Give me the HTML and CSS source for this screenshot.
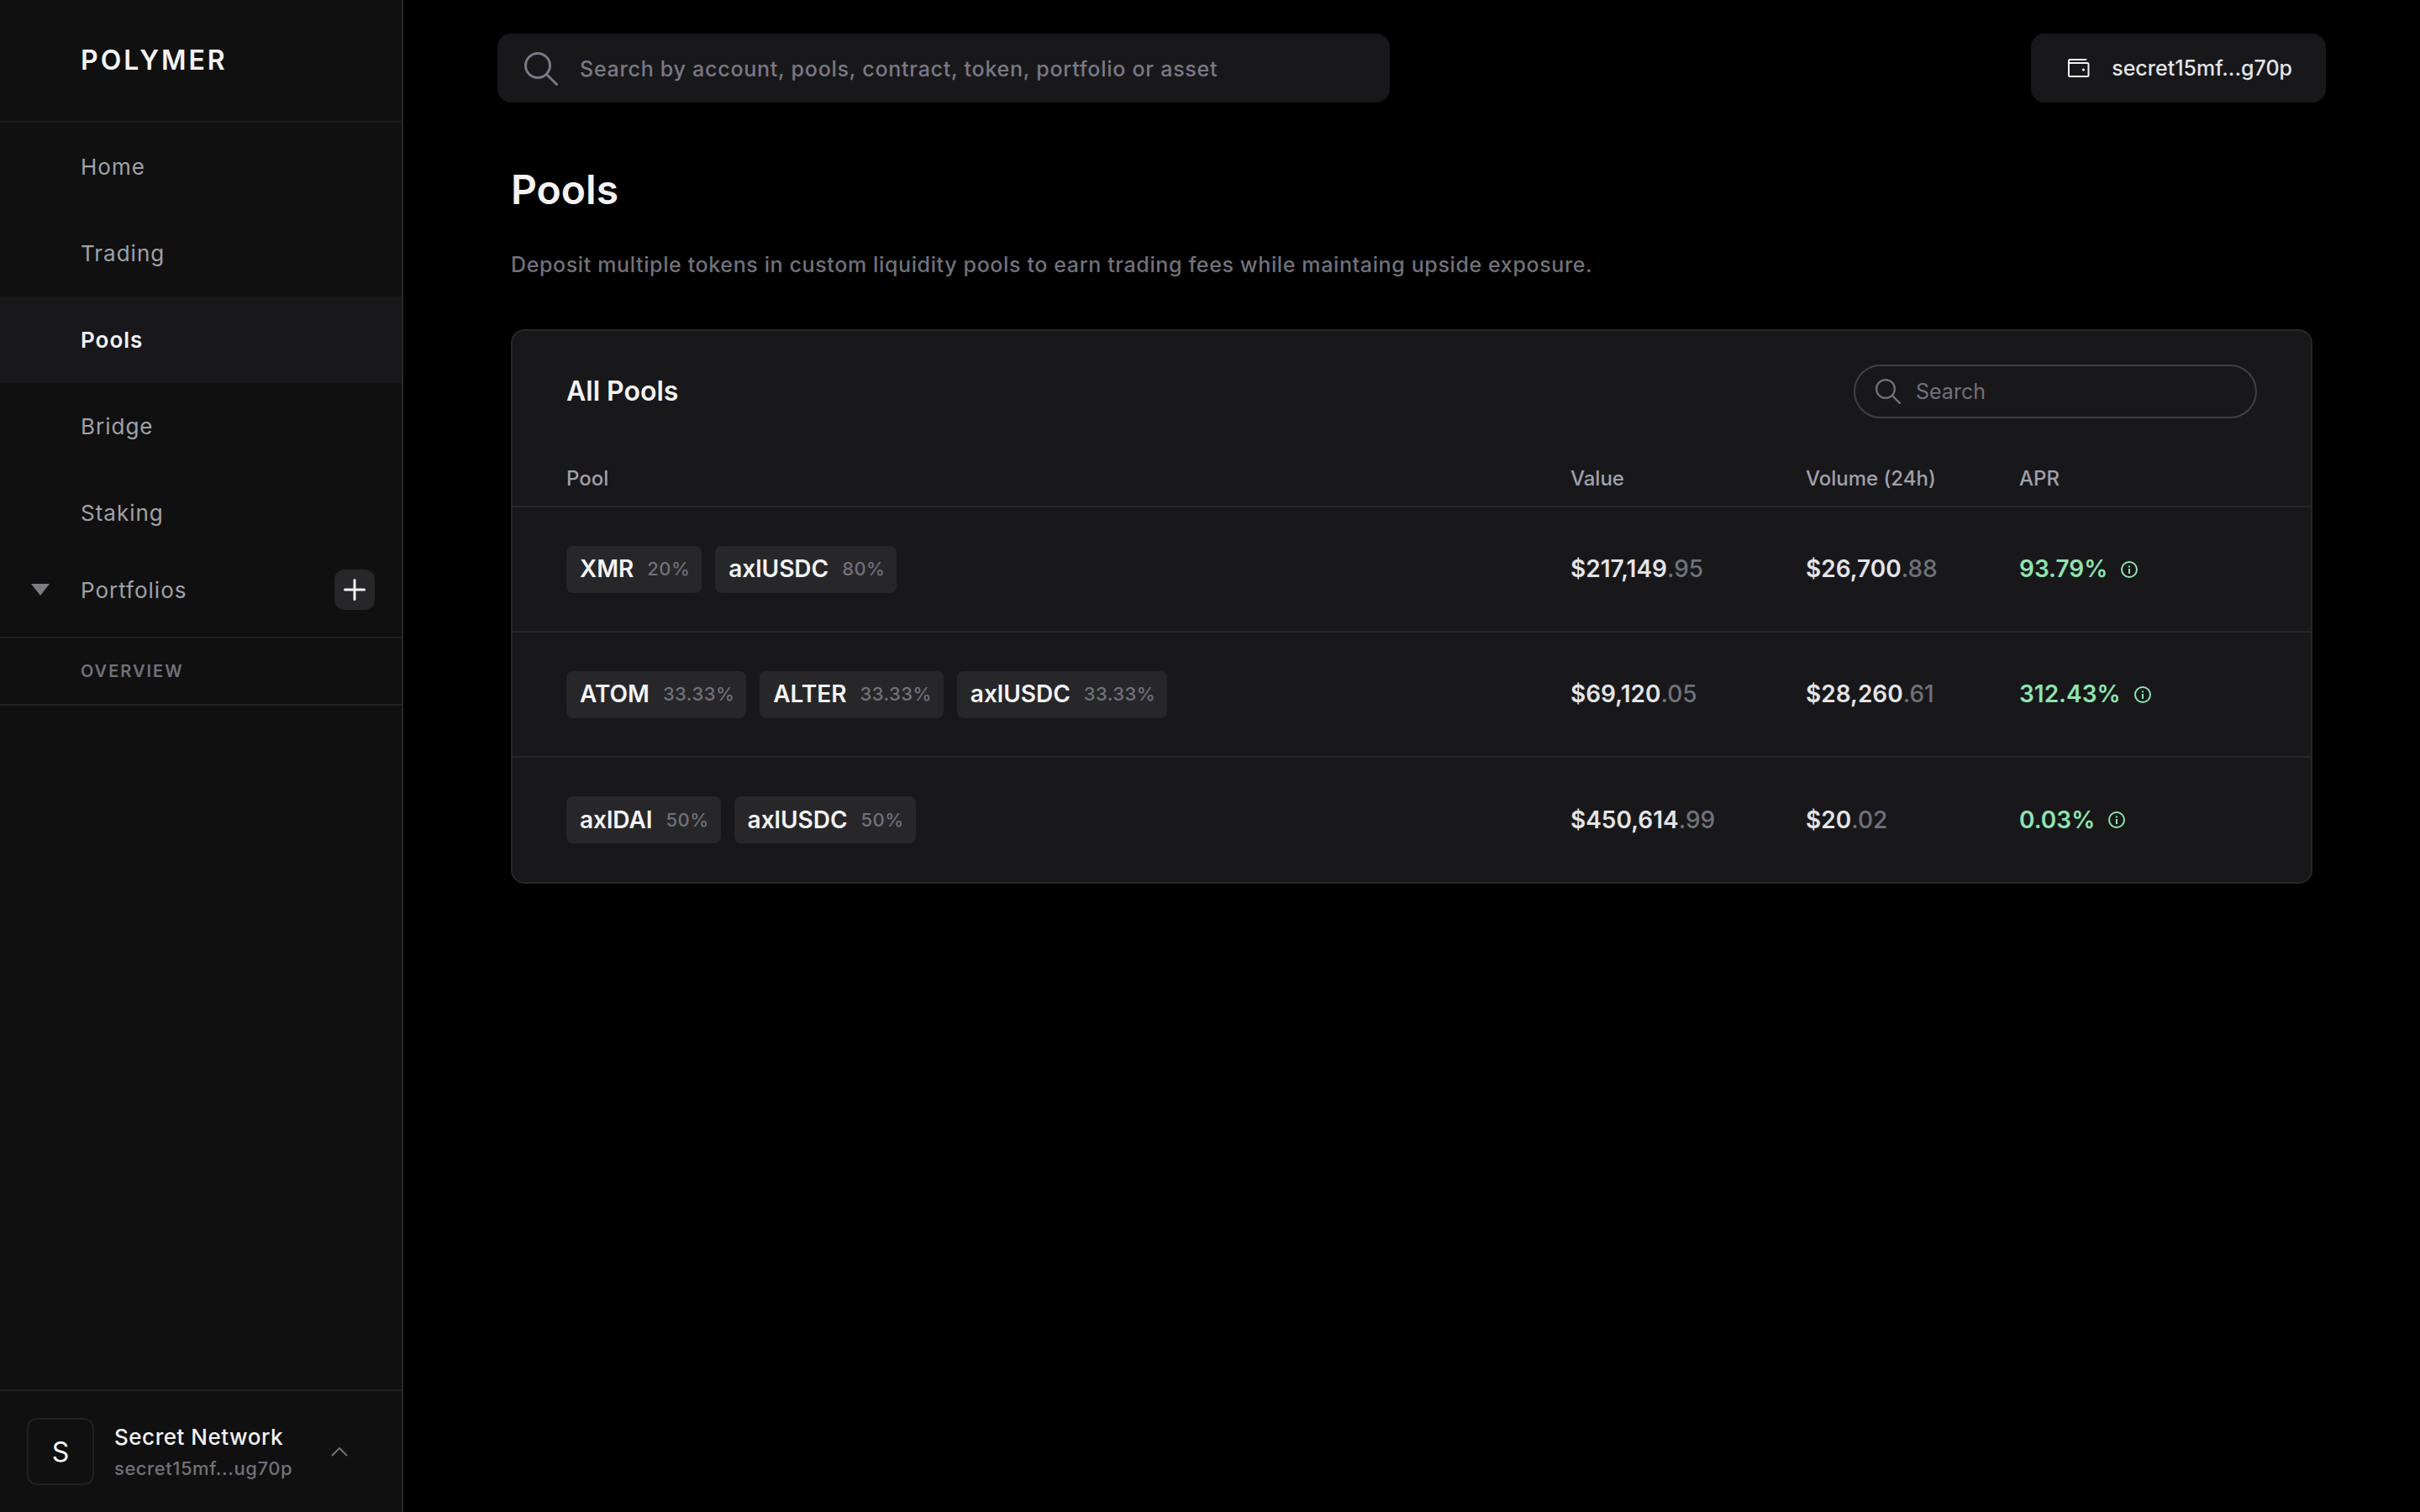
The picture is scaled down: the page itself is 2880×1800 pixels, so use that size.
FILE: index.html
```html
<!DOCTYPE html>
<html lang="en">
<head>
<meta charset="utf-8">
<meta name="viewport" content="width=device-width, initial-scale=1">
<title>Pools – Polymer</title>
<link rel="stylesheet" href="styles.css">
</head>
<body>
<div class="app">
  <aside class="sidebar">
    <a class="brand" href="#">POLYMER</a>
    <nav class="nav" aria-label="Main">
      <a class="nav-link" href="#">Home</a>
      <a class="nav-link" href="#">Trading</a>
      <a class="nav-link is-active" href="#" aria-current="page">Pools</a>
      <a class="nav-link" href="#">Bridge</a>
      <a class="nav-link" href="#">Staking</a>
    </nav>
    <div class="portfolios">
      <button class="portfolios-toggle" type="button" aria-expanded="true">
        <svg class="caret" viewBox="0 0 22 14" aria-hidden="true"><path d="M0 0h22L11 14z"/></svg>
        <span>Portfolios</span>
      </button>
      <button class="add-button" type="button" aria-label="Add portfolio">
        <svg class="plus" viewBox="0 0 26 26" aria-hidden="true"><path d="M13 1.500v23M1.500 13h23"/></svg>
      </button>
    </div>
    <a class="overview" href="#">OVERVIEW</a>
    <button class="account" type="button">
      <span class="avatar">S</span>
      <span class="account-text">
        <span class="account-name">Secret Network</span>
        <span class="account-address">secret15mf...ug70p</span>
      </span>
      <svg class="chevron" viewBox="0 0 20 12" aria-hidden="true"><path d="M1.500 10.500 10 2l8.500 8.500"/></svg>
    </button>
  </aside>

  <main class="main">
    <header class="topbar">
      <label class="global-search">
        <svg class="search-icon" viewBox="0 0 40 40" aria-hidden="true"><circle cx="16" cy="16" r="14.500"/><path d="M26.500 26.500 38.500 38.500"/></svg>
        <input class="global-input" type="text" aria-label="Search everything" placeholder="Search by account, pools, contract, token, portfolio or asset">
      </label>
      <button class="wallet" type="button">
        <svg class="wallet-icon" viewBox="0 0 32 24" aria-hidden="true"><path d="M25.500 2H6.500Q5 2 5 3.500V20.500Q5 22 6.500 22H27Q28.500 22 28.500 20.500V7.500Q28.500 6 27 6H5"/><circle cx="22.500" cy="14" r="1.600"/></svg>
        <span>secret15mf...g70p</span>
      </button>
    </header>

    <section class="content">
      <h1 class="title">Pools</h1>
      <p class="lead">Deposit multiple tokens in custom liquidity pools to earn trading fees while maintaing upside exposure.</p>

      <div class="card">
        <div class="card-head">
          <h2 class="card-title">All Pools</h2>
          <label class="pool-search">
            <svg class="search-icon search-icon-small" viewBox="0 0 40 40" aria-hidden="true"><circle cx="16" cy="16" r="14.500"/><path d="M26.500 26.500 38.500 38.500"/></svg>
            <input class="pool-input" type="text" aria-label="Search pools" placeholder="Search">
          </label>
        </div>
        <table class="pools">
          <colgroup><col><col class="col-value"><col class="col-volume"><col class="col-apr"></colgroup>
          <thead>
            <tr><th scope="col">Pool</th><th scope="col">Value</th><th scope="col">Volume (24h)</th><th scope="col">APR</th></tr>
          </thead>
          <tbody>
            <tr>
              <td><div class="chips"><span class="chip">XMR <small>20%</small></span><span class="chip">axlUSDC <small>80%</small></span></div></td>
              <td>$217,149<span class="cents">.95</span></td>
              <td>$26,700<span class="cents">.88</span></td>
              <td><div class="apr">93.79% <svg class="info" viewBox="0 0 20 20" aria-hidden="true"><circle cx="10" cy="10" r="9"/><path d="M10 9v6M10 5.500v2"/></svg></div></td>
            </tr>
            <tr>
              <td><div class="chips"><span class="chip">ATOM <small>33.33%</small></span><span class="chip">ALTER <small>33.33%</small></span><span class="chip">axlUSDC <small>33.33%</small></span></div></td>
              <td>$69,120<span class="cents">.05</span></td>
              <td>$28,260<span class="cents">.61</span></td>
              <td><div class="apr">312.43% <svg class="info" viewBox="0 0 20 20" aria-hidden="true"><circle cx="10" cy="10" r="9"/><path d="M10 9v6M10 5.500v2"/></svg></div></td>
            </tr>
            <tr>
              <td><div class="chips"><span class="chip">axlDAI <small>50%</small></span><span class="chip">axlUSDC <small>50%</small></span></div></td>
              <td>$450,614<span class="cents">.99</span></td>
              <td>$20<span class="cents">.02</span></td>
              <td><div class="apr">0.03% <svg class="info" viewBox="0 0 20 20" aria-hidden="true"><circle cx="10" cy="10" r="9"/><path d="M10 9v6M10 5.500v2"/></svg></div></td>
            </tr>
          </tbody>
        </table>
      </div>
    </section>
  </main>
</div>
</body>
</html>
```
FILE: styles.css
```css
* { box-sizing: border-box; }

body {
  margin: 0;
  background: #000;
  color: #f4f4f5;
  font-family: Inter, "Liberation Sans", sans-serif;
  font-size: 26px;
  line-height: 39px;
}

a { color: inherit; text-decoration: none; }

button, input {
  margin: 0;
  padding: 0;
  border: 0;
  background: none;
  color: inherit;
  font: inherit;
  letter-spacing: inherit;
  text-align: left;
}

button { cursor: pointer; }
input { outline: 0; }

svg {
  flex: none;
  fill: none;
  stroke: currentColor;
  stroke-linecap: round;
  stroke-linejoin: round;
}

.app { display: flex; min-height: 100vh; }

/* Sidebar */
.sidebar {
  display: flex;
  flex: none;
  flex-direction: column;
  width: 480px;
  border-right: 2px solid #27272a;
  background: #101010;
}

.brand {
  padding: 48px 96px;
  border-bottom: 2px solid #1c1c21;
  font-size: 32px;
  font-weight: 600;
  line-height: 48px;
  letter-spacing: 3px;
}

.nav { display: flex; flex-direction: column; padding-top: 1px; }

.nav-link {
  padding: 32px 96px;
  color: #a1a1aa;
  letter-spacing: 1px;
}

.is-active {
  background: #18181b;
  color: #f4f4f5;
  font-weight: 600;
}

.portfolios {
  display: flex;
  align-items: center;
  justify-content: space-between;
  padding: 16px 32px 32px 37px;
  border-bottom: 2px solid #202025;
}

.portfolios-toggle {
  display: flex;
  align-items: center;
  gap: 37px;
  color: #a1a1aa;
  letter-spacing: 1px;
}

.caret { width: 22px; height: 14px; fill: #7c7d80; stroke: none; }

.add-button {
  display: grid;
  place-items: center;
  width: 48px;
  height: 48px;
  border-radius: 12px;
  background: #27272a;
}

.plus { width: 26px; height: 26px; stroke-width: 3; }

.overview {
  padding: 24px 96px;
  border-bottom: 2px solid #202025;
  color: #71717a;
  font-size: 20px;
  font-weight: 600;
  line-height: 30px;
  letter-spacing: 2px;
}

.account {
  display: flex;
  align-items: center;
  gap: 24px;
  margin-top: auto;
  padding: 32px 64px 32px 32px;
  border-top: 2px solid #202025;
}

.avatar {
  display: grid;
  place-items: center;
  width: 80px;
  height: 80px;
  border: 2px solid #202025;
  border-radius: 12px;
  font-size: 32px;
}

.account-text { display: flex; flex: 1; flex-direction: column; }
.account-name { font-weight: 500; letter-spacing: 0.02em; }
.account-address {
  color: #71717a;
  font-size: 22px;
  font-weight: 500;
  line-height: 36px;
  letter-spacing: 0.025em;
}
.chevron { width: 20px; height: 12px; color: #71717a; stroke-width: 2; }

/* Main column */
.main { flex: 1; min-width: 0; padding: 40px 112px; }

.topbar { display: flex; align-items: center; justify-content: space-between; gap: 32px; }

.global-search {
  display: flex;
  flex: 0 1 1062px;
  align-items: center;
  gap: 26px;
  height: 82px;
  padding: 2px 32px 0;
  border-radius: 16px;
  background: #18181b;
  color: #7a7885;
}

.search-icon { width: 40px; height: 40px; stroke-width: 3; }
.global-input { flex: 1; min-width: 0; font-size: 25px; font-weight: 500; letter-spacing: 0.03em; }
::placeholder { color: #71717a; opacity: 1; }
.global-input::placeholder { color: #7a7885; }

.wallet {
  display: flex;
  align-items: center;
  gap: 24px;
  height: 82px;
  padding: 0 40px;
  border-radius: 16px;
  background: #18181b;
  color: #e4e4e7;
  font-size: 25px;
  font-weight: 500;
}

.wallet-icon { width: 32px; height: 24px; color: #f4f4f5; stroke-width: 2; }
.wallet-icon circle { fill: currentColor; stroke: none; }

.content { padding: 68px 16px 0; }
.title { margin: 0; font-size: 48px; font-weight: 600; line-height: 72px; }
.lead {
  margin: 34px 0 0;
  color: #71717a;
  font-size: 25px;
  font-weight: 500;
  letter-spacing: 0.025em;
}

/* Pools card */
.card {
  margin-top: 57px;
  border: 2px solid #27272a;
  border-radius: 16px;
  background: #18181b;
  overflow: hidden;
}

.card-head {
  display: flex;
  align-items: center;
  justify-content: space-between;
  padding: 40px 64px 32px;
}

.card-title { margin: 0; font-size: 32px; font-weight: 600; line-height: 48px; }

.pool-search {
  display: flex;
  align-items: center;
  gap: 18px;
  width: 480px;
  height: 64px;
  padding: 0 24px;
  border: 2px solid #3f3f46;
  border-radius: 32px;
  color: #71717a;
}

.search-icon-small { width: 30px; height: 30px; }
.pool-input { flex: 1; min-width: 0; font-size: 25px; }

.pools { width: 100%; border-collapse: collapse; table-layout: fixed; }
.col-value { width: 280px; }
.col-volume { width: 254px; }
.col-apr { width: 347px; }

.pools th {
  height: 73px;
  padding: 8px 0 0;
  color: #a1a1aa;
  font-size: 24px;
  font-weight: 500;
  line-height: 36px;
  text-align: left;
}

.pools td {
  height: 149px;
  padding: 0;
  border-top: 2px solid #27272a;
  color: #e4e4e7;
  font-size: 28px;
  font-weight: 600;
}

.pools th:first-child, .pools td:first-child { padding-left: 64px; }

.cents { color: #71717a; font-weight: 500; }

.chips { display: flex; gap: 16px; }

.chip {
  display: flex;
  align-items: center;
  gap: 16px;
  height: 56px;
  padding: 0 14px 0 16px;
  border-radius: 8px;
  background: #27272a;
  color: #f4f4f5;
}

.chip small { color: #71717a; font-size: 22px; font-weight: 500; letter-spacing: 0.02em; }

.apr { display: flex; align-items: center; gap: 16px; color: #8fe3b0; }
.info { width: 20px; height: 20px; stroke-width: 2; stroke-linecap: butt; }
```
